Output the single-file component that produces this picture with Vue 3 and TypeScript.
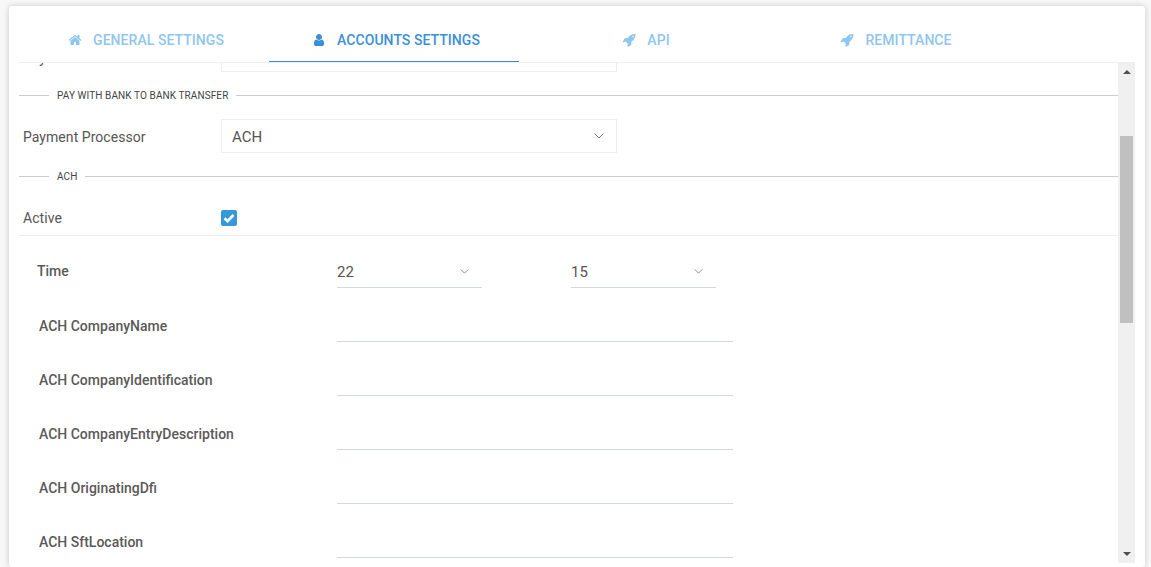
<script setup lang="ts">
import { onMounted, ref } from 'vue'

interface Tab { label: string; icon: 'home' | 'user' | 'rocket'; active?: boolean }

const tabs: Tab[] = [
  { label: 'General Settings', icon: 'home' },
  { label: 'Accounts Settings', icon: 'user', active: true },
  { label: 'API', icon: 'rocket' },
  { label: 'Remittance', icon: 'rocket' },
]

const icons: Record<Tab['icon'], string> = {
  home: 'M1472 992v480q0 26-19 45t-45 19h-384v-384h-256v384h-384q-26 0-45-19t-19-45v-480q0-1 .5-3t.5-3l575-474 575 474q1 2 1 6zm223-69l-62 74q-8 9-21 11h-3q-13 0-21-7l-692-577-692 577q-12 8-24 7-13-2-21-11l-62-74q-8-10-7-23.5t11-21.5l719-599q32-26 76-26t76 26l244 204v-195q0-14 9-23t23-9h192q14 0 23 9t9 23v408l219 182q10 8 11 21.5t-7 23.5z',
  user: 'M1536 1399q0 109-62.5 187t-150.5 78h-854q-88 0-150.5-78t-62.5-187q0-85 8.5-160.5t31.5-152 58.5-131 94-89 134.5-34.5q131 128 313 128t313-128q76 0 134.5 34.5t94 89 58.5 131 31.5 152 8.5 160.5zm-256-887q0 159-112.5 271.5t-271.5 112.5-271.5-112.5-112.5-271.5 112.5-271.5 271.5-112.5 271.5 112.5 112.5 271.5z',
  rocket: 'M1504 448q0-40-28-68t-68-28-68 28-28 68 28 68 68 28 68-28 28-68zm224-288q0 249-75.5 430.5t-253.5 360.5q-81 80-195 176l-20 379q-2 16-16 26l-384 224q-7 4-16 4-12 0-23-9l-64-64q-13-14-8-32l85-276-281-281-276 85q-3 1-9 1-14 0-23-9l-64-64q-17-19-5-39l224-384q10-14 26-16l379-20q96-114 176-195 188-187 358-258t431-71q14 0 23 9t9 23z',
}

const textFields = ['ACH CompanyName', 'ACH CompanyIdentification', 'ACH CompanyEntryDescription', 'ACH OriginatingDfi', 'ACH SftLocation']

const scroller = ref<HTMLElement | null>(null)
onMounted(() => {
  if (scroller.value) scroller.value.scrollTop = 25
})
</script>

<template>
  <div class="card">
    <nav class="tabs">
      <a v-for="t in tabs" :key="t.label" class="tab" :class="{ active: t.active }">
        <svg class="tab-icon" viewBox="0 0 1792 1792"><path :d="icons[t.icon]" fill="currentColor" /></svg>
        <span>{{ t.label }}</span>
      </a>
    </nav>
    <div class="panel">
      <div ref="scroller" class="scroll">
        <div class="row proc">
          <label class="proc-label first-label">Payment Processor</label>
          <div class="box-select"></div>
        </div>
        <div class="legend"><span>Pay with bank to bank transfer</span></div>
        <div class="row proc">
          <label class="proc-label">Payment Processor</label>
          <div class="box-select">
            <span>ACH</span>
            <svg class="chev" viewBox="0 0 10 6"><path d="M.5.5 5 5 9.500.5" /></svg>
          </div>
        </div>
        <div class="legend"><span>ACH</span></div>
        <div class="row active-row">
          <label class="proc-label">Active</label>
          <span class="check">
            <svg viewBox="0 0 16 16"><path d="M3.500 8.200 6.600 11.200 12.500 5" /></svg>
          </span>
        </div>
        <div class="row time-row">
          <label class="field-label time-label">Time</label>
          <div class="line-select">
            <span>22</span>
            <svg class="chev" viewBox="0 0 10 6"><path d="M.5.5 5 5 9.500.5" /></svg>
          </div>
          <div class="line-select">
            <span>15</span>
            <svg class="chev" viewBox="0 0 10 6"><path d="M.5.5 5 5 9.500.5" /></svg>
          </div>
        </div>
        <div v-for="f in textFields" :key="f" class="row text-row">
          <label class="field-label">{{ f }}</label>
          <div class="line-input"></div>
        </div>
      </div>
      <div class="bar">
        <i class="arrow up"></i>
        <div class="thumb"></div>
        <i class="arrow down"></i>
      </div>
    </div>
  </div>
</template>

<style>
html, body { margin: 0; height: 100%; overflow: hidden; background: #f8f8f8; }
</style>

<style scoped>
.card {
  box-sizing: border-box;
  height: 561px;
  margin: 6px 6px 0 9px;
  padding-right: 10px;
  background: #fff;
  border-radius: 3px;
  box-shadow: 0 0 6px rgba(0, 0, 0, .2);
  font-family: Roboto, sans-serif;
  color: #555;
}
.tabs {
  display: flex;
  height: 56px;
  padding-left: 2px;
  border-bottom: 1px solid #eee;
  margin-left: 10px;
}
.tab {
  box-sizing: border-box;
  width: 250px;
  height: 56px;
  padding-top: 12px;
  display: flex;
  align-items: center;
  justify-content: center;
  gap: 11px;
  font-size: 14px;
  font-weight: 500;
  letter-spacing: .05px;
  text-transform: uppercase;
  color: #8fc6ef;
}
.tab.active {
  color: #3b8fd9;
  border-bottom: 1px solid #3b8fd9;
  margin-left: -2px;
  margin-right: 2px;
  padding-left: 4px;
}
.tab-icon { width: 14px; height: 14px; flex: none; }
.panel {
  display: flex;
  height: 500px;
  margin-left: 10px;
}
.scroll {
  flex: 1;
  min-width: 0;
  overflow: hidden;
  padding-bottom: 30px;
  box-sizing: border-box;
}
.bar {
  position: relative;
  flex: none;
  width: 17px;
  background: #f0f0f0;
}
.thumb {
  position: absolute;
  left: 2px;
  top: 73px;
  width: 13px;
  height: 187px;
  background: #c0c0c0;
}
.arrow {
  position: absolute;
  left: 5px;
  width: 0;
  height: 0;
  border-left: 4px solid transparent;
  border-right: 4px solid transparent;
}
.arrow.up { top: 7px; border-bottom: 4px solid #505050; }
.arrow.down { bottom: 7px; border-top: 4px solid #505050; }
.row { display: flex; align-items: center; }
.proc { height: 34px; padding-left: 4px; }
.proc-label {
  width: 198px;
  padding-top: 2px;
  font-size: 14px;
  letter-spacing: .05px;
  color: #555;
  flex: none;
}
.first-label { padding-top: 6px; }
.active-row .proc-label { padding-top: 0; }
.box-select {
  box-sizing: border-box;
  position: relative;
  display: flex;
  align-items: center;
  width: 396px;
  height: 34px;
  padding-left: 10px;
  padding-top: 1px;
  border: 1px solid #eee;
  font-size: 15px;
  color: #555;
}
.chev {
  position: absolute;
  width: 10px;
  height: 6px;
  fill: none;
  stroke: #777;
  stroke-width: 1;
}
.box-select .chev { right: 12px; top: 13px; }
.legend {
  display: flex;
  align-items: center;
  height: 47px;
  font-size: 10px;
  letter-spacing: .1px;
  text-transform: uppercase;
  color: #444;
}
.legend::before {
  content: '';
  width: 30px;
  height: 1px;
  background: #ccc;
  margin-right: 8px;
}
.legend::after {
  content: '';
  flex: 1;
  height: 1px;
  background: #ccc;
  margin-left: 8px;
}
.active-row {
  box-sizing: border-box;
  height: 36px;
  padding-left: 4px;
  padding-top: 1px;
  border-bottom: 1px solid #eee;
}
.check {
  width: 16px;
  height: 16px;
  border-radius: 2px;
  background: #3498db;
}
.check svg {
  display: block;
  width: 16px;
  height: 16px;
  fill: none;
  stroke: #fff;
  stroke-width: 2.6;
}
.time-row {
  height: 54px;
  padding-left: 18px;
  margin-top: 8px;
}
.field-label {
  width: 298px;
  flex: none;
  padding-top: 2px;
  font-size: 14px;
  font-weight: 500;
  color: #5a5a5a;
}
.time-label { width: 300px; padding-top: 0; }
.line-select {
  box-sizing: border-box;
  position: relative;
  width: 145px;
  height: 34px;
  margin-right: 89px;
  border-bottom: 1px solid #d3d9d9;
  font-size: 15px;
  line-height: 36px;
  color: #555;
}
.line-select .chev { right: 13px; top: 15px; width: 9px; height: 5px; }
.text-row {
  height: 54px;
  padding-left: 20px;
}
.line-input {
  box-sizing: border-box;
  width: 396px;
  height: 34px;
  border-bottom: 1px solid #d3d9d9;
}
</style>
